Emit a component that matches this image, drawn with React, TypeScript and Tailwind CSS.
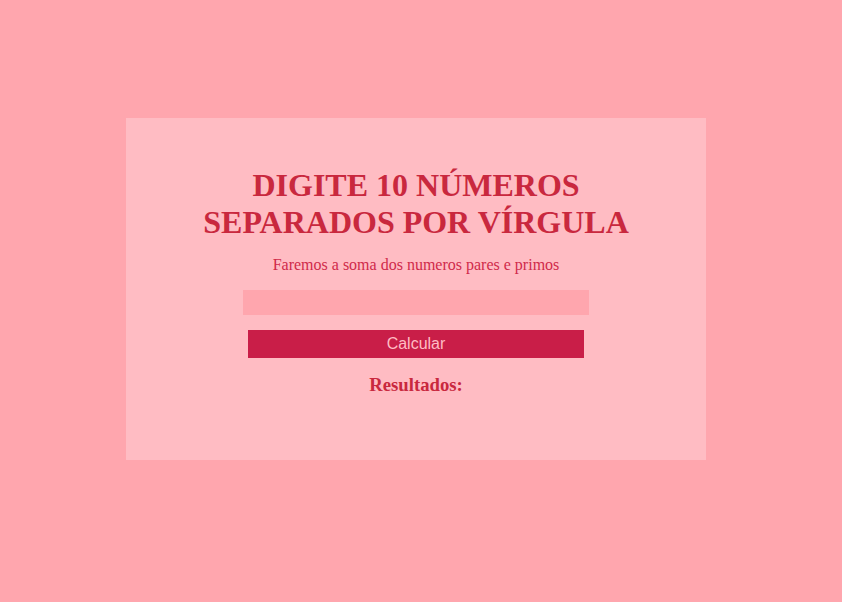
export default function App() {
  return (
    <div className="min-h-[602px] w-full bg-[#ffa6ae] pt-[118px] pl-[126px]">
      <div className="flex h-[342px] w-[580px] flex-col items-center bg-[#ffbcc3] pt-[49px] font-['Liberation_Serif',serif] text-[#c9283e]">
        <h1 className="text-center text-[32px] font-bold leading-[37px]">
          DIGITE 10 NÚMEROS
          <br />
          SEPARADOS POR VÍRGULA
        </h1>
        <p className="mt-[15px] text-[16px] leading-[18px] text-[#d02a4a]">
          Faremos a soma dos numeros pares e primos
        </p>
        <input
          type="text"
          className="mt-[16px] h-[25px] w-[346px] bg-[#ffa6ae] outline-none"
        />
        <button className="mt-[15px] h-[28px] w-[336px] bg-[#c91e48] font-['Liberation_Sans',sans-serif] text-[16px] text-[#ffbcc3]">
          Calcular
        </button>
        <h3 className="mt-[16px] text-[18.72px] font-bold leading-[22px]">Resultados:</h3>
      </div>
    </div>
  )
}
